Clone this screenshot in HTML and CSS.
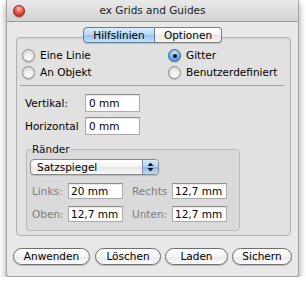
FILE: index.html
```html
<!DOCTYPE html>
<html>
<head>
<meta charset="utf-8">
<link rel="stylesheet" href="styles.css">
</head>
<body>
<div class="window">
  <div class="titlebar">
    <span class="close"></span>
    <span class="title">ex Grids and Guides</span>
    <span></span>
  </div>
  <div class="tabs">
    <span class="tab sel">Hilfslinien</span>
    <span class="tab opt">Optionen</span>
  </div>
  <div class="panel">
    <div class="radios">
      <div class="radio"><span class="rb"></span><span>Eine Linie</span></div>
      <div class="radio"><span class="rb on"></span><span>Gitter</span></div>
      <div class="radio"><span class="rb"></span><span>An Objekt</span></div>
      <div class="radio"><span class="rb"></span><span>Benutzerdefiniert</span></div>
    </div>
    <div class="sep"></div>
    <div class="fields">
      <span class="lbl">Vertikal:</span><span class="input">0 mm</span>
      <span class="lbl">Horizontal</span><span class="input">0 mm</span>
    </div>
    <fieldset class="group">
      <legend>Ränder</legend>
      <div class="popup">
        <span class="ptext">Satzspiegel</span>
        <span class="parrows">
          <svg width="7" height="10" viewBox="0 0 7 10"><path d="M3.5 0.5 L6.5 4 L0.5 4 Z M3.5 9.5 L6.5 6 L0.5 6 Z" fill="#111"/></svg>
        </span>
      </div>
      <div class="mgrid">
        <span class="glbl">Links:</span><span class="input sm">20 mm</span>
        <span class="glbl">Rechts</span><span class="input sm">12,7 mm</span>
        <span class="glbl">Oben:</span><span class="input sm">12,7 mm</span>
        <span class="glbl">Unten:</span><span class="input sm">12,7 mm</span>
      </div>
    </fieldset>
  </div>
  <div class="buttons">
    <span class="btn b1">Anwenden</span>
    <span class="btn b2">Löschen</span>
    <span class="btn b3">Laden</span>
    <span class="btn b4">Sichern</span>
  </div>
</div>
</body>
</html>
```
FILE: styles.css
```css
* { box-sizing: border-box; }
body {
  margin: 0;
  background: #fff;
  font-family: "DejaVu Sans", "Liberation Sans", sans-serif;
  font-size: 10.5px;
  color: #000;
}
.window {
  margin-left: 6px;
  width: 293px;
  height: 277px;
  background: #e8e8e8;
  border: 1px solid #a3a3a3;
  border-top: 0;
  border-radius: 0 0 3px 3px;
  box-shadow: 0 4px 7px rgba(0,0,0,.4);
}
.titlebar {
  height: 22px;
  display: grid;
  grid-template-columns: 24px 1fr 24px;
  align-items: center;
  background: linear-gradient(#e9e9e9, #d2d2d2);
  border-bottom: 1px solid #9a9a9a;
}
.close {
  width: 12px;
  height: 12px;
  margin-left: 6px;
  border-radius: 50%;
  border: 1px solid #8a2a22;
  background: radial-gradient(circle at 50% 28%, #ffc2b8 0, #ee5a4c 45%, #b4190f 100%);
  box-shadow: 0 1px 1px rgba(0,0,0,.2);
}
.title {
  text-align: center;
  color: #222;
  line-height: 13px;
}
.tabs {
  margin-top: 5px;
  display: flex;
  justify-content: center;
  height: 16px;
  position: relative;
  z-index: 1;
}
.tab {
  height: 16px;
  line-height: 14px;
  text-align: center;
  border: 1px solid #7d7d7d;
  background: linear-gradient(#ffffff, #f4f4f4 50%, #e6e6e6 52%, #f6f6f6);
  box-shadow: 0 1px 1px rgba(0,0,0,.15);
}
.tab.sel {
  width: 72px;
  border-radius: 4px 0 0 4px;
  background: linear-gradient(#dcedfd, #b5d7f7 50%, #93c3f1 52%, #c6e3fd);
  border-color: #5f7d9c;
}
.tab.opt {
  width: 67px;
  border-left: 0;
  border-radius: 0 4px 4px 0;
}
.panel {
  margin: -6px 0 0 9px;
  width: 275px;
  height: 199px;
  border: 1px solid #b1b1b1;
  border-radius: 4px;
  background: #e1e1e1;
  padding-top: 11px;
  box-shadow: inset 0 1px 2px rgba(0,0,0,.06);
}
.radios {
  display: grid;
  grid-template-columns: 146px auto;
  row-gap: 4px;
  padding-left: 5px;
}
.radio {
  display: flex;
  align-items: center;
  height: 13px;
  gap: 5px;
  line-height: 13px;
}
.rb {
  flex: none;
  width: 13px;
  height: 13px;
  border-radius: 50%;
  border: 1px solid #8a8a8a;
  background: radial-gradient(circle at 50% 75%, #ffffff 0, #f0f0f0 35%, #cfcfcf 100%);
  box-shadow: 0 1px 1px rgba(0,0,0,.18);
  display: flex;
  align-items: center;
  justify-content: center;
}
.rb.on {
  border-color: #41638e;
  background: radial-gradient(circle at 50% 30%, #d2e8fc 0, #7db5ee 45%, #3a7fd6 100%);
}
.rb.on::after {
  content: "";
  width: 4px;
  height: 4px;
  border-radius: 50%;
  background: #111;
}
.sep {
  height: 1px;
  background: #a2a2a2;
  margin: 6px 6px 0 3px;
}
.fields {
  display: grid;
  grid-template-columns: 60px 55px;
  row-gap: 5px;
  padding-left: 8px;
  margin-top: 8px;
  align-items: center;
}
.input {
  display: block;
  width: 55px;
  height: 18px;
  background: #fff;
  border: 1px solid #ababab;
  border-top-color: #8c8c8c;
  padding: 0 3px;
  line-height: 16px;
  box-shadow: inset 0 1px 1px rgba(0,0,0,.1);
  white-space: nowrap;
}
.input.sm {
  height: 16px;
  line-height: 14px;
  padding: 0 2px;
}
.group {
  margin: 8px 0 0 9px;
  width: 214px;
  min-width: 0;
  padding: 4px 0 8px 0;
  border: 1px solid #b9b9b9;
  border-radius: 4px;
  background: #dadada;
}
.group legend {
  padding: 0 1px;
  margin-left: 4px;
  line-height: 12px;
  color: #111;
}
.popup {
  margin-left: 3px;
  width: 129px;
  height: 16px;
  display: flex;
  border: 1px solid #8a8a8a;
  border-radius: 4px;
  background: linear-gradient(#ffffff, #f3f3f3 50%, #e7e7e7 52%, #f7f7f7);
  box-shadow: 0 1px 1px rgba(0,0,0,.15);
  overflow: hidden;
}
.ptext {
  flex: 1;
  padding-left: 6px;
  line-height: 14px;
}
.parrows {
  width: 16px;
  display: flex;
  align-items: center;
  justify-content: center;
  border-left: 1px solid #7891ad;
  background: linear-gradient(#d6eafc, #a9d0f5 50%, #86bbef 52%, #bcdcfb);
}
.mgrid {
  margin-top: 8px;
  display: grid;
  grid-template-columns: 36px 64px 40px 55px;
  row-gap: 7px;
  padding-left: 5px;
  align-items: center;
}
.glbl {
  color: #7c7c7c;
  white-space: nowrap;
}
.buttons {
  display: flex;
  gap: 4px;
  margin: 12px 0 0 6px;
}
.btn {
  height: 17px;
  line-height: 15px;
  text-align: center;
  border: 1px solid #6e6e6e;
  border-radius: 9px;
  background: linear-gradient(#ffffff, #f5f5f5 50%, #e8e8e8 52%, #fbfbfb);
  box-shadow: 0 1px 1px rgba(0,0,0,.2);
}
.b1 { width: 77px; margin-right: 1px; }
.b2 { width: 66px; }
.b3 { width: 63px; }
.b4 { width: 60px; }
```
